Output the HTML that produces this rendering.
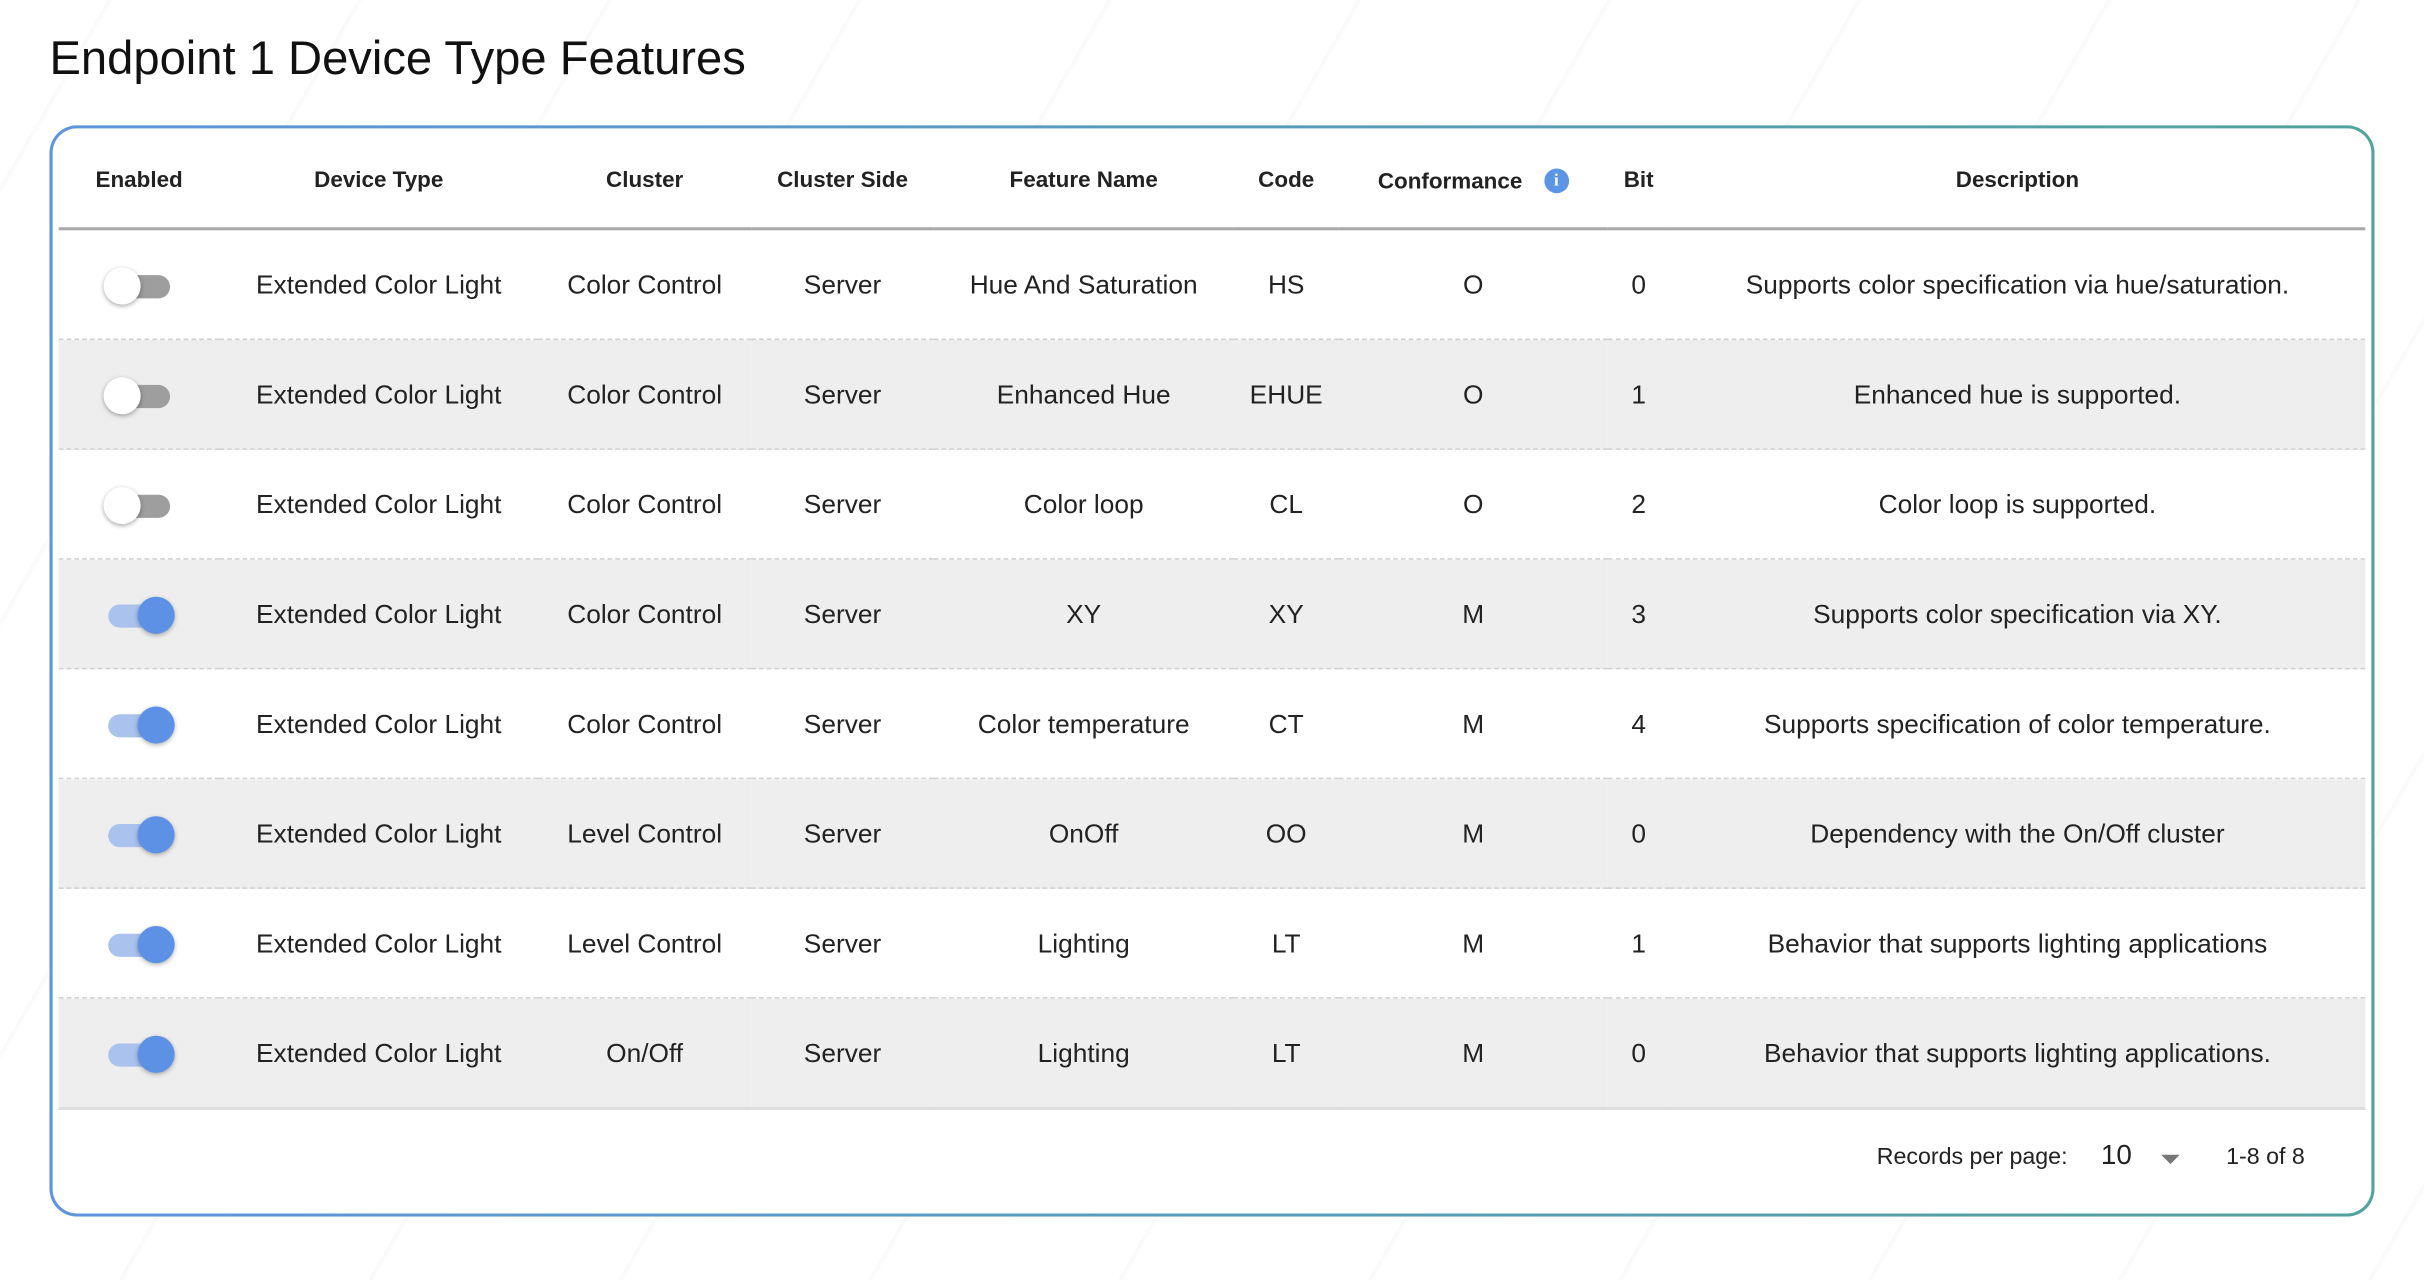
<!DOCTYPE html>
<html><head><meta charset="utf-8">
<style>
html,body{margin:0;padding:0;width:2424px;height:1280px;overflow:hidden;background:#fff;}
#w{position:absolute;left:0;top:0;width:1568px;height:828px;transform:scale(1.545918);transform-origin:0 0;font-family:"Liberation Sans",Arial,sans-serif;color:#222;
background:repeating-linear-gradient(120deg,#fff 0,#fff 60px,#f9f9f9 61px,#fff 64px,#fff 140px);}
h1{position:absolute;left:32px;top:21px;margin:0;font-weight:400;font-size:30.5px;letter-spacing:0;color:#111;}
.card{position:absolute;left:32px;top:81px;width:1504px;height:706px;box-sizing:border-box;border:2px solid transparent;border-radius:18px;
background:linear-gradient(#fff,#fff) padding-box,linear-gradient(90deg,#5e95de,#53a39c) border-box;}
table{position:absolute;left:4px;top:0;border-collapse:collapse;table-layout:fixed;width:1492px;}
th{height:60px;padding:4px 0 0 0;font-size:14.5px;font-weight:700;text-align:center;border-bottom:2px solid #aaa;}
td{height:68px;font-size:17px;text-align:center;padding:2px 0 0 0;border-bottom:1px dashed #d0d0d0;}
tr.g td{background:#eee;}
tr.last td{border-bottom:2px solid #ddd;}
.tg{position:relative;display:inline-block;width:44px;height:24px;vertical-align:middle;left:0;}
.tg .tr{position:absolute;left:2px;top:5px;width:40px;height:15px;border-radius:8px;background:#9e9e9e;}
.tg .kn{position:absolute;left:-1px;top:0;width:24px;height:24px;border-radius:50%;background:#fff;box-shadow:0 1px 3px rgba(0,0,0,.35);}
.tg.on .tr{background:#a9c2ee;}
.tg.on .kn{left:21px;background:#5c91e6;box-shadow:0 1px 3px rgba(0,0,0,.3);}
.info{display:inline-block;width:16px;height:16px;border-radius:50%;background:#5c95e6;color:#fff;font-size:11px;line-height:16px;font-weight:700;vertical-align:2px;margin-left:14px;font-family:"Liberation Serif",serif;}
.ft{position:absolute;top:657px;font-size:15px;color:#222;}
</style></head><body><div id="w">
<h1>Endpoint 1 Device Type Features</h1>
<div class="card">
<table>
<colgroup><col style="width:104px"><col style="width:206px"><col style="width:138px"><col style="width:118px"><col style="width:194px"><col style="width:68px"><col style="width:174px"><col style="width:40px"><col style="width:450px"></colgroup>
<tr><th>Enabled</th><th>Device Type</th><th>Cluster</th><th>Cluster Side</th><th>Feature Name</th><th>Code</th><th>Conformance<span class="info">i</span></th><th>Bit</th><th>Description</th></tr>
<tr><td><span class="tg"><span class="tr"></span><span class="kn"></span></span></td><td>Extended Color Light</td><td>Color Control</td><td>Server</td><td>Hue And Saturation</td><td>HS</td><td>O</td><td>0</td><td>Supports color specification via hue/saturation.</td></tr>
<tr class="g"><td><span class="tg"><span class="tr"></span><span class="kn"></span></span></td><td>Extended Color Light</td><td>Color Control</td><td>Server</td><td>Enhanced Hue</td><td>EHUE</td><td>O</td><td>1</td><td>Enhanced hue is supported.</td></tr>
<tr><td><span class="tg"><span class="tr"></span><span class="kn"></span></span></td><td>Extended Color Light</td><td>Color Control</td><td>Server</td><td>Color loop</td><td>CL</td><td>O</td><td>2</td><td>Color loop is supported.</td></tr>
<tr class="g"><td><span class="tg on"><span class="tr"></span><span class="kn"></span></span></td><td>Extended Color Light</td><td>Color Control</td><td>Server</td><td>XY</td><td>XY</td><td>M</td><td>3</td><td>Supports color specification via XY.</td></tr>
<tr><td><span class="tg on"><span class="tr"></span><span class="kn"></span></span></td><td>Extended Color Light</td><td>Color Control</td><td>Server</td><td>Color temperature</td><td>CT</td><td>M</td><td>4</td><td>Supports specification of color temperature.</td></tr>
<tr class="g"><td><span class="tg on"><span class="tr"></span><span class="kn"></span></span></td><td>Extended Color Light</td><td>Level Control</td><td>Server</td><td>OnOff</td><td>OO</td><td>M</td><td>0</td><td>Dependency with the On/Off cluster</td></tr>
<tr><td><span class="tg on"><span class="tr"></span><span class="kn"></span></span></td><td>Extended Color Light</td><td>Level Control</td><td>Server</td><td>Lighting</td><td>LT</td><td>M</td><td>1</td><td>Behavior that supports lighting applications</td></tr>
<tr class="g last"><td><span class="tg on"><span class="tr"></span><span class="kn"></span></span></td><td>Extended Color Light</td><td>On/Off</td><td>Server</td><td>Lighting</td><td>LT</td><td>M</td><td>0</td><td>Behavior that supports lighting applications.</td></tr>
</table>
<div class="ft" style="left:1180px;">Records per page:</div>
<div class="ft" style="left:1325px;top:654px;font-size:18px;">10</div>
<div style="position:absolute;left:1364px;top:664px;width:0;height:0;border-left:6px solid transparent;border-right:6px solid transparent;border-top:6px solid #777;"></div>
<div class="ft" style="left:1406px;">1-8 of 8</div>
</div>
</div></body></html>
